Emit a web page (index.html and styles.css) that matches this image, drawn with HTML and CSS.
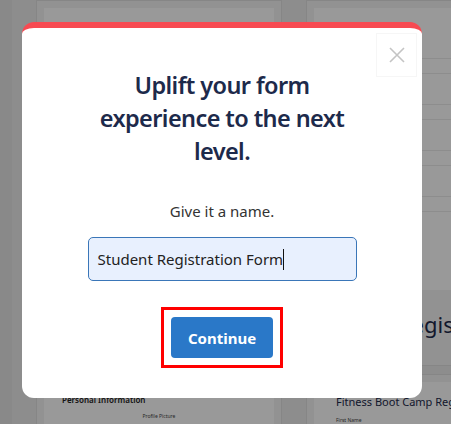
FILE: index.html
```html
<!DOCTYPE html>
<html lang="en">
<head>
  <meta charset="UTF-8" />
  <meta name="viewport" content="width=device-width, initial-scale=1.0"/>
  <title>Choose a template</title>
  <link rel="stylesheet" href="styles.css">
</head>
<body>

  <!-- Template gallery (behind the dialog) -->
  <div class="page">
    <div class="templates">
      <div class="card">
        <div class="preview">
          <div class="field"></div>
          <div class="field"></div>
          <div class="field"></div>
          <div class="field"></div>
        </div>
        <div class="card-title"></div>
      </div>
      <div class="card">
        <div class="preview">
          <div class="field"></div>
          <div class="field"></div>
          <div class="field"></div>
          <div class="field"></div>
        </div>
        <div class="card-title">Event Registration</div>
      </div>
      <div class="card">
        <div class="preview">
          <div class="preview-heading">Personal Information</div>
          <div class="preview-label centered">Profile Picture</div>
        </div>
      </div>
      <div class="card">
        <div class="preview">
          <div class="preview-heading large">Fitness Boot Camp Registration</div>
          <div class="preview-row">
            <span class="preview-label">First Name</span>
            <span class="preview-label">Last Name</span>
          </div>
        </div>
      </div>
    </div>
  </div>

  <!-- Name dialog -->
  <div class="overlay">
    <div class="modal">
      <button class="close" aria-label="Close">
        <svg width="16" height="16" viewBox="0 0 16 16">
          <path d="M1 1L15 15M15 1L1 15" stroke="#c4c4c4" stroke-width="1.6" fill="none"/>
        </svg>
      </button>

      <h2>Uplift your form experience to the next level.</h2>
      <p class="hint">Give it a name.</p>

      <div class="name-field">Student Registration Form<span class="caret"></span></div>

      <div class="highlight">
        <button class="continue">Continue</button>
      </div>
    </div>
  </div>

</body>
</html>
```

FILE: styles.css
```css
body {
  margin: 0;
  font-family: 'Noto Sans', 'Open Sans', sans-serif;
  color: #333;
  overflow: hidden;
}

/* Gallery behind the overlay */
.page {
  height: 424px;
  overflow: hidden;
  background: #ebebeb;
  border-left: 12px solid #e4e4e4;
  padding-left: 24px;
}

.templates {
  display: grid;
  grid-template-columns: 246px 246px;
  gap: 8px 24px;
}

.card {
  background: #f3f3f3;
  border: 1px solid #e0e0e0;
  padding: 7px;
}

.preview {
  background: #fff;
  height: 282px;
  padding: 20px 18px;
  box-sizing: border-box;
}

.field {
  height: 14px;
  border: 1px solid #ececec;
  margin-bottom: 8px;
  margin-top: 30px;
}

.card-title {
  height: 68px;
  display: flex;
  align-items: center;
  justify-content: center;
  font-size: 22px;
  white-space: nowrap;
  color: #1d2a4b;
}

.card:nth-child(n+3) .preview {
  padding-top: 12px;
}

.preview-heading {
  font-size: 8px;
  font-weight: 600;
  color: #222;
}

.preview-heading.large {
  font-size: 11px;
  font-weight: 400;
  color: #1d2a4b;
  margin-left: 4px;
}

.preview-label {
  font-size: 5px;
  color: #444;
}

.preview-label.centered {
  text-align: center;
  margin-top: 8px;
}

.preview-row {
  display: flex;
  justify-content: space-between;
  margin: 8px 0 0 4px;
}

/* Dialog */
.overlay {
  position: fixed;
  inset: 0;
  background: rgba(0, 0, 0, 0.4);
  padding: 22px;
}

.modal {
  position: relative;
  width: 400px;
  box-sizing: border-box;
  background: #fff;
  border-top: 6px solid #f74a52;
  border-radius: 12px;
  padding: 41px 0 30px;
  text-align: center;
}

.close {
  position: absolute;
  top: 5px;
  right: 5px;
  width: 41px;
  height: 44px;
  border: 1px solid #f6f6f6;
  background: #fff;
  padding: 0;
  display: flex;
  align-items: center;
  justify-content: center;
  cursor: pointer;
}

.modal h2 {
  max-width: 262px;
  margin: 0 auto;
  font-size: 23.5px;
  letter-spacing: -0.6px;
  line-height: 33px;
  font-weight: 600;
  color: #1d2a4b;
}

.hint {
  margin: 33px 0 16px;
  font-size: 15px;
  line-height: 20px;
  color: #333;
}

.name-field {
  width: 269px;
  margin: 0 auto;
  box-sizing: border-box;
  padding: 11px 9px 10px;
  background: #e8f0fe;
  border: 1px solid #3a76b8;
  border-radius: 5px;
  font-size: 15px;
  line-height: 20px;
  color: #222;
  text-align: left;
}

.caret {
  display: inline-block;
  width: 1px;
  height: 21px;
  background: #111;
  vertical-align: -5px;
}

.highlight {
  display: inline-block;
  margin-top: 26px;
  border: 3px solid #ff0000;
  padding: 7px;
}

.continue {
  display: block;
  width: 102px;
  height: 41px;
  border: none;
  border-radius: 4px;
  background-color: #2a78c8;
  color: #fff;
  font-family: inherit;
  font-size: 15px;
  font-weight: 700;
  cursor: pointer;
}
```
